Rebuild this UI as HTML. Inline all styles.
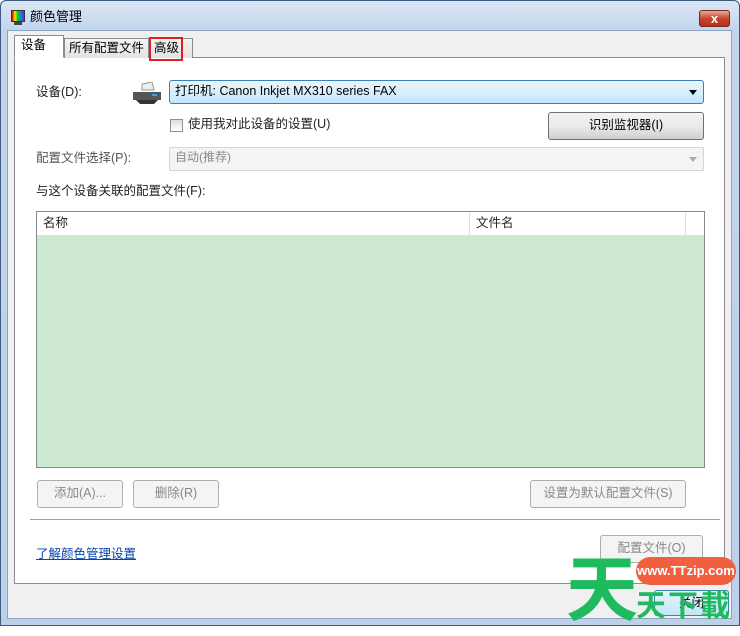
<!DOCTYPE html><html><head><meta charset="utf-8"><style>
*{margin:0;padding:0;box-sizing:border-box}
body{width:740px;height:626px;overflow:hidden;font-family:"Liberation Sans","Noto Sans CJK SC",sans-serif;font-size:12px;line-height:1.15;color:#000;background:#fff}
.a{position:absolute;white-space:nowrap}
.win{left:0;top:0;width:740px;height:626px;background:linear-gradient(#dbe7f5,#c2d5ec 30px,#bcd0ea);border:1px solid #3d5a80;border-radius:6px 6px 0 0}
.client{left:7px;top:30px;width:725px;height:589px;background:#f0f0f0;border:1px solid #8ea4c0}
.panel{left:14px;top:57px;width:711px;height:527px;background:#fff;border:1px solid #898c95}
.tab{top:38px;height:20px;border:1px solid #898c95;border-bottom:none;background:linear-gradient(#f4f4f4,#e3e3e3);padding:2px 4px;font-size:12.5px}
.btn{border:1px solid #adadad;border-radius:3px;background:#f4f4f4;color:#888;text-align:center;line-height:25px;font-size:12.5px}
.lbl{font-size:12.5px;color:#222}
</style></head><body>
<div class="a win"></div>
<div class="a" style="left:11px;top:10px;width:14px;height:12px;background:linear-gradient(90deg,#d00,#ee0,#0c0,#08f,#a0f);border:1px solid #333"></div>
<div class="a" style="left:14px;top:22px;width:8px;height:3px;background:#444"></div>
<div class="a" style="left:30px;top:10px;font-size:13px">颜色管理</div>
<div class="a" style="left:699px;top:10px;width:31px;height:17px;border:1px solid #6b2a1c;border-radius:3px;background:linear-gradient(#e9a99a,#c7452a 50%,#b9301a);color:#fff;text-align:center;font-weight:bold;line-height:15px;font-size:13px">x</div>
<div class="a client"></div>
<div class="a panel"></div>
<div class="a tab" style="left:14px;top:35px;height:23px;background:#fff;width:50px;z-index:2;border-bottom:1px solid #fff;padding-left:6px">设备</div>
<div class="a tab" style="left:64px;width:85px">所有配置文件</div>
<div class="a tab" style="left:149px;width:44px">高级</div>
<div class="a" style="left:149px;top:37px;width:34px;height:24px;border:2px solid #e02020"></div>
<div class="a lbl" style="left:36px;top:85px">设备(D):</div>
<div class="a" style="left:132px;top:82px;width:30px;height:20px">
<svg width="32" height="22"><path d="M10 2l10-2 2 8H10z" fill="#eee" stroke="#999"/><path d="M1 10h28v8H1z" fill="#555"/><path d="M4 18h22l-4 4H8z" fill="#333"/><rect x="20" y="12" width="5" height="2" fill="#2af"/></svg></div>
<div class="a" style="left:169px;top:80px;width:535px;height:24px;border:1px solid #3c7fb1;border-radius:3px;background:linear-gradient(#eaf6fd,#d9f0fc 50%,#bee6fd);padding:3px 5px;font-size:12.5px">打印机: Canon Inkjet MX310 series FAX<span class="a" style="right:6px;top:9px;border:4px solid transparent;border-top:5px solid #000"></span></div>
<div class="a" style="left:170px;top:119px;width:13px;height:13px;border:1px solid #8f8f8f;background:linear-gradient(#ddd,#fff)"></div>
<div class="a lbl" style="left:188px;top:117px">使用我对此设备的设置(U)</div>
<div class="a btn" style="left:548px;top:112px;width:156px;height:28px;color:#000;background:linear-gradient(#f2f2f2,#ebebeb 50%,#cfcfcf);border-color:#707070">识别监视器(I)</div>
<div class="a lbl" style="left:36px;top:151px;color:#555">配置文件选择(P):</div>
<div class="a" style="left:169px;top:147px;width:535px;height:24px;border:1px solid #d5d5d5;border-radius:2px;background:#f4f4f4;padding:3px 5px;color:#888">自动(推荐)<span class="a" style="right:6px;top:9px;border:4px solid transparent;border-top:5px solid #aaa"></span></div>
<div class="a lbl" style="left:36px;top:184px">与这个设备关联的配置文件(F):</div>
<div class="a" style="left:36px;top:211px;width:669px;height:257px;border:1px solid #828790;background:#cde8d1"></div>
<div class="a" style="left:37px;top:212px;width:667px;height:24px;background:#fff;border-bottom:1px solid #e0e0e0"></div>
<div class="a" style="left:469px;top:212px;width:1px;height:24px;background:#e0e0e0"></div>
<div class="a" style="left:685px;top:212px;width:1px;height:24px;background:#e0e0e0"></div>
<div class="a lbl" style="left:43px;top:216px">名称</div>
<div class="a lbl" style="left:476px;top:216px">文件名</div>
<div class="a btn" style="left:37px;top:480px;width:86px;height:28px">添加(A)...</div>
<div class="a btn" style="left:133px;top:480px;width:86px;height:28px">删除(R)</div>
<div class="a btn" style="left:530px;top:480px;width:156px;height:28px">设置为默认配置文件(S)</div>
<div class="a" style="left:30px;top:519px;width:690px;height:1px;background:#a0a0a0"></div>
<div class="a" style="left:36px;top:547px;color:#0645ad;text-decoration:underline;font-size:12.5px">了解颜色管理设置</div>
<div class="a btn" style="left:600px;top:535px;width:103px;height:28px">配置文件(O)</div>
<div class="a btn" style="left:654px;top:590px;width:75px;height:26px;color:#000;background:linear-gradient(#e5f4fc,#c4e5f6);border-color:#3c7fb1">关闭</div>
<div class="a" style="left:566px;top:548px;font-size:72px;font-weight:bold;color:#1fba5e;line-height:72px;font-family:'Noto Sans CJK SC',sans-serif">天</div>
<div class="a" style="left:636px;top:557px;width:100px;height:28px;border-radius:14px;background:#f0603f;color:#fff;font-weight:bold;font-size:13px;text-align:center;line-height:28px">www.TTzip.com</div>
<div class="a" style="left:636px;top:585px;font-size:30px;font-weight:bold;color:#1fba5e;letter-spacing:2px;line-height:36px;font-family:'Noto Sans CJK SC',sans-serif">天下載</div>
</body></html>
